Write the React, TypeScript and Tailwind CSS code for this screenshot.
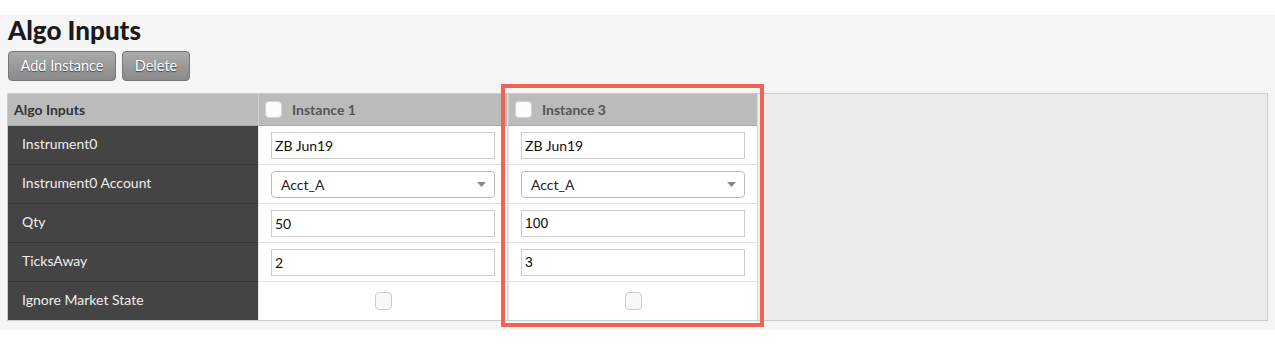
import React from "react";

const rows = ["Instrument0", "Instrument0 Account", "Qty", "TicksAway", "Ignore Market State"];

type Inst = { name: string; instrument: string; account: string; qty: string; ticks: string; numFont: string };

const instances: Inst[] = [
  { name: "Instance 1", instrument: "ZB Jun19", account: "Acct_A", qty: "50", ticks: "2", numFont: "font-['Lato',sans-serif] text-[14px]" },
  { name: "Instance 3", instrument: "ZB Jun19", account: "Acct_A", qty: "100", ticks: "3", numFont: "font-['Liberation_Sans',Arial,sans-serif] text-[14px]" },
];

function TextBox({ value, className = "text-[14px]" }: { value: string; className?: string }) {
  return (
    <div className={`h-[27px] w-[224px] border border-[#cccccc] bg-white flex items-center pl-[3px] text-[#111] ${className}`}>
      {value}
    </div>
  );
}

function SelectBox({ value }: { value: string }) {
  return (
    <div className="h-[27px] w-[224px] border border-[#bbbbbb] rounded-[4px] bg-white flex items-center justify-between pl-[9px] pr-[8px] text-[14px] text-[#222]">
      <span>{value}</span>
      <svg width="9" height="5" viewBox="0 0 9 5">
        <path d="M0 0 L9 0 L4.5 5 Z" fill="#888" />
      </svg>
    </div>
  );
}

function InstanceColumn({ inst, highlight }: { inst: Inst; highlight?: boolean }) {
  return (
    <div className="relative w-[250px] flex flex-col border-r border-[#dddddd]">
      <div className="h-[32px] bg-[#bbbbbb] border-b border-[#a9a9a9] border-l border-l-[#cfcfcf] flex items-center pl-[6px]">
        <div className="w-[17px] h-[17px] rounded-[4px] bg-[#fcfcfc] border border-[#d4d4d4]" />
        <span className="ml-[10px] text-[14px] font-bold text-[#555555]">{inst.name}</span>
      </div>
      <div className="h-[39px] border-b border-[#e2e2e2] border-l border-l-[#e2e2e2] bg-white flex items-center pl-[12px]">
        <TextBox value={inst.instrument} />
      </div>
      <div className="h-[39px] border-b border-[#e2e2e2] border-l border-l-[#e2e2e2] bg-white flex items-center pl-[12px]">
        <SelectBox value={inst.account} />
      </div>
      <div className="h-[39px] border-b border-[#e2e2e2] border-l border-l-[#e2e2e2] bg-white flex items-center pl-[12px]">
        <TextBox value={inst.qty} className={inst.numFont} />
      </div>
      <div className="h-[39px] border-b border-[#e2e2e2] border-l border-l-[#e2e2e2] bg-white flex items-center pl-[12px]">
        <TextBox value={inst.ticks} className={inst.numFont} />
      </div>
      <div className="h-[38px] border-l border-l-[#e2e2e2] bg-white flex items-center justify-center">
        <div className="w-[17px] h-[18px] rounded-[4px] bg-[#f8f8f8] border border-[#cccccc]" />
      </div>
      {highlight && (
        <div className="pointer-events-none absolute left-[-7px] top-[-10px] right-[-7px] bottom-[-7px] border-4 border-[#ef6454]" />
      )}
    </div>
  );
}

export default function App() {
  return (
    <div className="w-[1275px] h-[347px] bg-white font-['Lato',sans-serif]">
      <div className="h-[15px]" />
      <div className="bg-[#f5f5f5] pl-[7px] pr-[7px] pb-[9px]">
        <h1 className="pl-[1px] text-[26px] leading-[30px] font-black text-[#1a1a1a]">Algo Inputs</h1>
        <div className="flex gap-[6px] mt-[6px] pl-[1px]">
          <button className="h-[30px] w-[108px] rounded-[4px] border border-[#777] bg-gradient-to-b from-[#ababab] to-[#8a8a8a] text-white text-[14.5px] [text-shadow:0_1px_1px_#444]">
            Add Instance
          </button>
          <button className="h-[30px] w-[68px] rounded-[4px] border border-[#777] bg-gradient-to-b from-[#ababab] to-[#8a8a8a] text-white text-[14.5px] [text-shadow:0_1px_1px_#444]">
            Delete
          </button>
        </div>
        <div className="mt-[12px] flex border border-[#cccccc] bg-[#ececec]">
          <div className="w-[250px] flex flex-col bg-[#444444]">
            <div className="h-[32px] bg-[#bbbbbb] border-b border-[#a9a9a9] flex items-center pl-[6px] text-[14px] font-bold text-[#333]">
              Algo Inputs
            </div>
            {rows.map((r, i) => (
              <div
                key={r}
                className={`${i === rows.length - 1 ? "h-[38px]" : "h-[39px] border-b border-[#363636]"} flex items-center pl-[14px] pb-[3px] text-[14px] text-[#eeeeee]`}
              >
                {r}
              </div>
            ))}
          </div>
          <InstanceColumn inst={instances[0]} />
          <InstanceColumn inst={instances[1]} highlight />
          <div className="flex-1" />
        </div>
      </div>
    </div>
  );
}
